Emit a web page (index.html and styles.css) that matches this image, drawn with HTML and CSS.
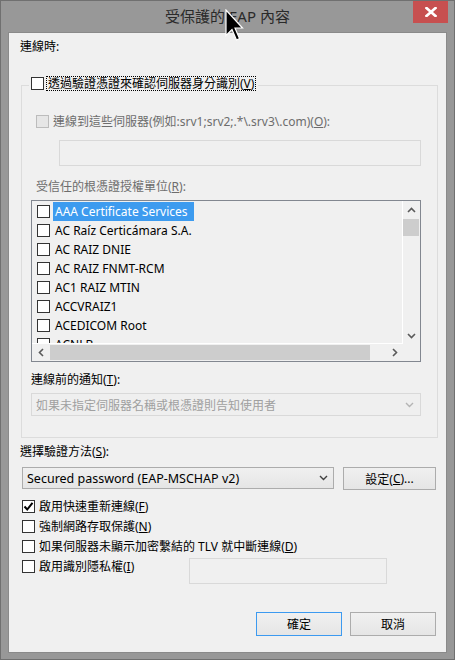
FILE: index.html
```html
<!DOCTYPE html>
<html>
<head>
<meta charset="utf-8">
<link rel="stylesheet" href="styles.css">
</head>
<body>
<div class="window">
  <div class="titlebar">
    <div class="title">受保護的 EAP 內容</div>
    <div class="close"><svg width="12" height="10" viewBox="0 0 12 10"><path d="M1.5 1 L10.5 9 M10.5 1 L1.5 9" stroke="#fff" stroke-width="2.6" stroke-linecap="square"/></svg></div>
  </div>
  <div class="client">
    <div class="lbl top-lbl">連線時:</div>
    <div class="group">
      <div class="legend"><span class="cb"></span><span class="focus">透過驗證憑證來確認伺服器身分識別(<u>V</u>)</span></div>
      <div class="row dis-row"><span class="cb cb-dis"></span><span>連線到這些伺服器(例如:srv1;srv2;.*\.srv3\.com)(<u>O</u>):</span></div>
      <div class="input dis-input servers"></div>
      <div class="lbl dis-text trusted">受信任的根憑證授權單位(<u>R</u>):</div>
      <div class="list">
        <div class="items">
          <div class="item"><span class="cb"></span><span class="itext sel">AAA Certificate Services</span></div>
          <div class="item"><span class="cb"></span><span class="itext">AC Raíz Certicámara S.A.</span></div>
          <div class="item"><span class="cb"></span><span class="itext">AC RAIZ DNIE</span></div>
          <div class="item"><span class="cb"></span><span class="itext">AC RAIZ FNMT-RCM</span></div>
          <div class="item"><span class="cb"></span><span class="itext">AC1 RAIZ MTIN</span></div>
          <div class="item"><span class="cb"></span><span class="itext">ACCVRAIZ1</span></div>
          <div class="item"><span class="cb"></span><span class="itext">ACEDICOM Root</span></div>
          <div class="item"><span class="cb"></span><span class="itext">ACNLB</span></div>
        </div>
        <div class="vscroll">
          <div class="sbtn"><svg width="9" height="6" viewBox="0 0 9 6"><path d="M1 5 L4.5 1.5 L8 5" fill="none" stroke="#5a5a5a" stroke-width="1.6"/></svg></div>
          <div class="vthumb"></div>
          <div class="vtrack"></div>
          <div class="sbtn"><svg width="9" height="6" viewBox="0 0 9 6"><path d="M1 1 L4.5 4.5 L8 1" fill="none" stroke="#5a5a5a" stroke-width="1.6"/></svg></div>
        </div>
        <div class="hscroll">
          <div class="sbtn"><svg width="6" height="9" viewBox="0 0 6 9"><path d="M5 1 L1.5 4.5 L5 8" fill="none" stroke="#5a5a5a" stroke-width="1.6"/></svg></div>
          <div class="hthumb"></div>
          <div class="sbtn"><svg width="6" height="9" viewBox="0 0 6 9"><path d="M1 1 L4.5 4.5 L1 8" fill="none" stroke="#5a5a5a" stroke-width="1.6"/></svg></div>
        </div>
        <div class="corner"></div>
      </div>
      <div class="lbl notify">連線前的通知(<u>T</u>):</div>
      <div class="combo combo-dis">
        <span>如果未指定伺服器名稱或根憑證則告知使用者</span>
        <svg width="9" height="6" viewBox="0 0 9 6"><path d="M1 1 L4.5 4.5 L8 1" fill="none" stroke="#b4b4b4" stroke-width="1.4"/></svg>
      </div>
    </div>
    <div class="lbl method-lbl">選擇驗證方法(<u>S</u>):</div>
    <div class="method-row">
      <div class="combo combo-en">
        <span>Secured password (EAP-MSCHAP v2)</span>
        <svg width="9" height="6" viewBox="0 0 9 6"><path d="M1 1 L4.5 4.5 L8 1" fill="none" stroke="#404040" stroke-width="1.4"/></svg>
      </div>
      <div class="btn settings">設定(<u>C</u>)...</div>
    </div>
    <div class="checks">
      <div class="row crow"><span class="cb"><svg width="11" height="11" viewBox="0 0 11 11"><path d="M1.5 5.5 L4.2 8.5 L9.5 1.8" fill="none" stroke="#000" stroke-width="2"/></svg></span><span>啟用快速重新連線(<u>F</u>)</span></div>
      <div class="row crow"><span class="cb"></span><span>強制網路存取保護(<u>N</u>)</span></div>
      <div class="row crow"><span class="cb"></span><span>如果伺服器未顯示加密繫結的 TLV 就中斷連線(<u>D</u>)</span></div>
      <div class="privacy-row">
        <div class="row crow"><span class="cb"></span><span>啟用識別隱私權(<u>I</u>)</span></div>
        <div class="input dis-input privacy"></div>
      </div>
    </div>
    <div class="buttons">
      <div class="btn ok">確定</div>
      <div class="btn">取消</div>
    </div>
  </div>
  <svg class="cursor" width="19" height="32" viewBox="0 0 19 32"><path d="M1 1 L1 26.5 L7 20.5 L11.5 31 L14.5 29.5 L10 19 L17.5 19 Z" fill="#000" stroke="#fff" stroke-width="1.2" stroke-linejoin="miter"/></svg>
</div>
</body>
</html>
```

FILE: styles.css
```css
* { box-sizing: border-box; }
body {
  margin: 0;
  font-family: "Noto Sans", "Noto Sans CJK TC", sans-serif;
  font-size: 12px;
  color: #000;
}
u { text-decoration: underline; text-underline-offset: 1px; }
.window {
  position: relative;
  width: 455px;
  height: 660px;
  background: #989898;
  border: 1px solid #707070;
}
.titlebar {
  height: 31px;
  display: grid;
  grid-template-columns: 1fr auto 1fr;
}
.title {
  grid-column: 2;
  font-size: 15px;
  line-height: 31px;
  color: #2a2a2a;
  white-space: nowrap;
}
.close {
  grid-column: 3;
  justify-self: end;
  align-self: start;
  width: 35px;
  height: 22px;
  margin-right: 6px;
  background: #c75050;
  display: flex;
  align-items: center;
  justify-content: center;
}
.client {
  margin: 0 7px;
  height: 621px;
  background: #f0f0f0;
  border: 1px solid #8a8a8a;
  padding-top: 6px;
}
.lbl {
  height: 16px;
  line-height: 16px;
  white-space: nowrap;
}
.top-lbl { margin-left: 11px; }
.group {
  margin: 30px 0 0 12px;
  width: 417px;
  border: 1px solid #dcdcdc;
  padding: 0 0 21px 9px;
}
.legend {
  display: flex;
  align-items: center;
  gap: 2px;
  width: fit-content;
  height: 15px;
  margin: -10px 0 0 -2px;
  padding: 0 2px;
  background: #f0f0f0;
}
.cb {
  width: 13px;
  height: 13px;
  flex: none;
  border: 1px solid #333;
  background: #fff;
  display: flex;
  align-items: center;
  justify-content: center;
}
.cb-dis {
  border-color: #bcbcbc;
  background: #e6e6e6;
}
.focus {
  border: 1px dotted #000;
  line-height: 13px;
  padding: 0 1px;
  white-space: nowrap;
}
.row {
  display: flex;
  align-items: center;
  gap: 4px;
  white-space: nowrap;
}
.dis-row {
  height: 16px;
  margin: 22px 0 0 5px;
  color: #6d6d6d;
}
.input {
  height: 26px;
  border: 1px solid #d9d9d9;
  background: #f0f0f0;
}
.servers {
  margin: 11px 0 0 28px;
  width: 362px;
}
.dis-text { color: #6d6d6d; }
.trusted { margin: 13px 0 0 5px; }
.list {
  margin-top: 5px;
  width: 390px;
  height: 162px;
  border: 1px solid #828790;
  background: #f0f0f0;
  display: grid;
  grid-template-columns: 1fr 17px;
  grid-template-rows: 1fr 17px;
  overflow: hidden;
}
.items {
  padding: 1px 0 0 5px;
  overflow: hidden;
  border-right: 1px solid #fff;
  border-bottom: 1px solid #fff;
}
.item {
  height: 19px;
  display: flex;
  align-items: center;
  gap: 3px;
  white-space: nowrap;
}
.itext {
  line-height: 19px;
  padding: 0 6px 0 2px;
}
.sel {
  background: #3d9bef;
  color: #fff;
}
.vscroll {
  display: flex;
  flex-direction: column;
}
.sbtn {
  width: 17px;
  height: 17px;
  flex: none;
  display: flex;
  align-items: center;
  justify-content: center;
}
.vthumb {
  height: 17px;
  margin: 1px 1px 0 0;
  background: #cdcdcd;
}
.vtrack { flex: 1; }
.hscroll {
  display: flex;
}
.hthumb {
  width: 320px;
  margin: 1px 0 1px 1px;
  background: #cdcdcd;
}
.hscroll .sbtn:last-child { margin-left: auto; }
.corner { background: #f0f0f0; }
.notify { margin-top: 10px; }
.combo {
  display: flex;
  align-items: center;
  justify-content: space-between;
  white-space: nowrap;
}
.combo-dis {
  margin-top: 5px;
  width: 390px;
  height: 23px;
  border: 1px solid #d9d9d9;
  background: #efefef;
  color: #a0a0a0;
  padding: 0 6px 0 4px;
}
.method-lbl { margin: 6px 0 0 11px; }
.method-row {
  display: flex;
  align-items: flex-start;
  margin: 7px 0 0 13px;
  height: 23px;
}
.combo-en {
  width: 312px;
  height: 22px;
  border: 1px solid #acacac;
  background: linear-gradient(#f0f0f0, #e5e5e5);
  padding: 0 5px 0 4px;
  font-size: 12.5px;
}
.btn {
  width: 86px;
  height: 24px;
  border: 1px solid #acacac;
  background: linear-gradient(#f0f0f0, #e5e5e5);
  display: flex;
  align-items: center;
  justify-content: center;
  white-space: nowrap;
}
.settings {
  width: 93px;
  height: 23px;
  margin-left: 9px;
}
.checks {
  margin: 6px 0 0 13px;
}
.crow { height: 20px; }
.privacy-row {
  display: grid;
  grid-template-columns: 167px 198px;
  align-items: start;
}
.privacy {
  margin-top: 2px;
  width: 198px;
}
.buttons {
  display: flex;
  justify-content: flex-end;
  gap: 8px;
  margin: 28px 10px 0 0;
}
.ok { border-color: #3c9af0; }
.cursor {
  position: absolute;
  left: 224px;
  top: 8px;
}
```
